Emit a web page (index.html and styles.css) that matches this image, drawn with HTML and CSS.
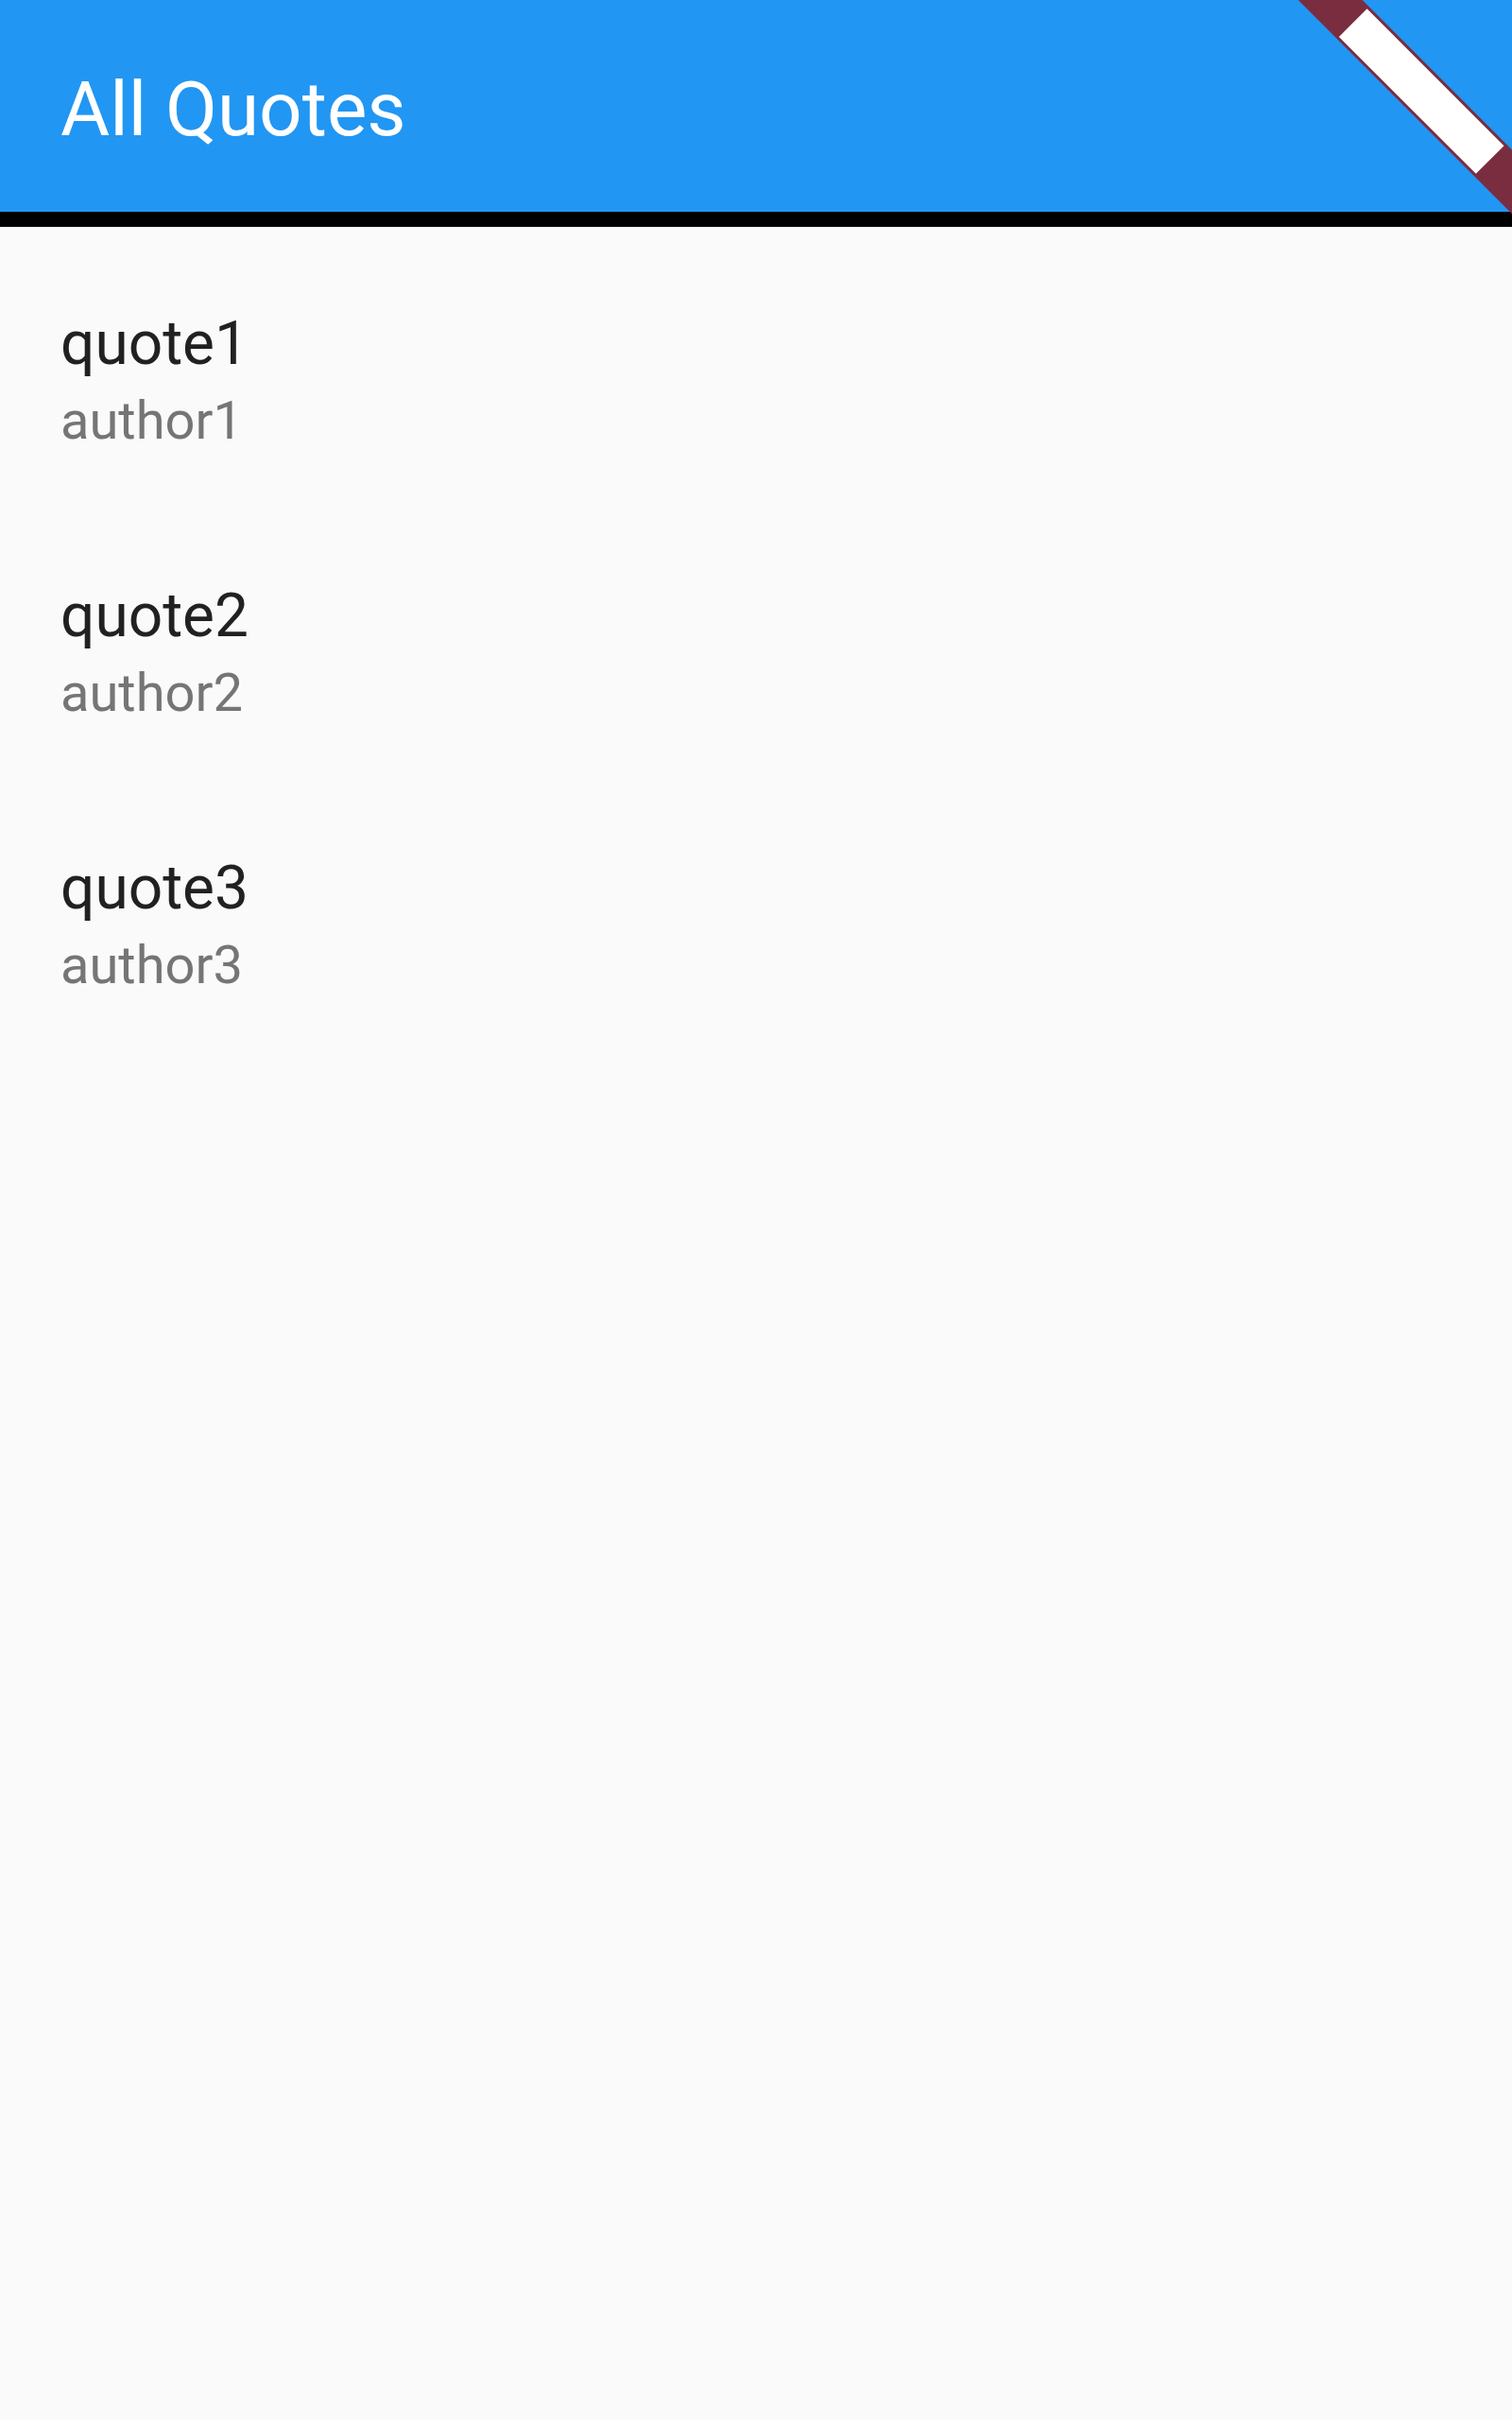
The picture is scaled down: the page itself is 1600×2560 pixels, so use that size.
FILE: index.html
```html
<!DOCTYPE html>
<html>
<head>
<meta charset="utf-8">
<title>All Quotes</title>
<link rel="stylesheet" href="styles.css">
</head>
<body>
<div class="app">
  <header class="appbar">
    <h1 class="appbar-title">All Quotes</h1>
  </header>
  <div class="appbar-edge"></div>
  <ul class="quote-list">
    <li class="quote-item">
      <div class="quote-text">quote1</div>
      <div class="quote-author">author1</div>
    </li>
    <li class="quote-item">
      <div class="quote-text">quote2</div>
      <div class="quote-author">author2</div>
    </li>
    <li class="quote-item">
      <div class="quote-text">quote3</div>
      <div class="quote-author">author3</div>
    </li>
  </ul>
  <div class="debug-banner">
    <div class="debug-band"><div class="debug-label"></div></div>
  </div>
</div>
</body>
</html>
```
FILE: styles.css
```css
html, body {
  margin: 0;
  padding: 0;
  background: #fafafa;
}
body {
  font-family: Roboto, "Noto Sans", "Liberation Sans", sans-serif;
}
.app {
  position: relative;
  width: 1600px;
  height: 2560px;
  overflow: hidden;
  background: #fafafa;
}
.appbar {
  height: 224px;
  background: #2196f3;
  display: flex;
  align-items: center;
  padding: 0 64px;
  box-sizing: border-box;
}
.appbar-title {
  margin: 0;
  font-size: 80px;
  font-weight: 400;
  color: #ffffff;
  line-height: 1;
  padding-top: 8px;
}
.appbar-edge {
  height: 16px;
  background: #000000;
}
.quote-list {
  list-style: none;
  margin: 0;
  padding: 21px 0 0 0;
}
.quote-item {
  height: 288px;
  box-sizing: border-box;
  padding: 64px 64px 0 64px;
}
.quote-text {
  font-size: 64px;
  line-height: 78px;
  color: #212121;
}
.quote-author {
  font-size: 56px;
  line-height: 84px;
  color: #757575;
}
.debug-banner {
  position: absolute;
  top: 0;
  right: 0;
  width: 0;
  height: 0;
  transform: rotate(45deg);
  transform-origin: 0 0;
}
.debug-band {
  position: absolute;
  left: -160px;
  top: 112px;
  width: 320px;
  height: 48px;
  background: #7a2d3f;
  display: flex;
  align-items: center;
  justify-content: center;
}
.debug-label {
  width: 205px;
  height: 42px;
  background: #ffffff;
}
```
